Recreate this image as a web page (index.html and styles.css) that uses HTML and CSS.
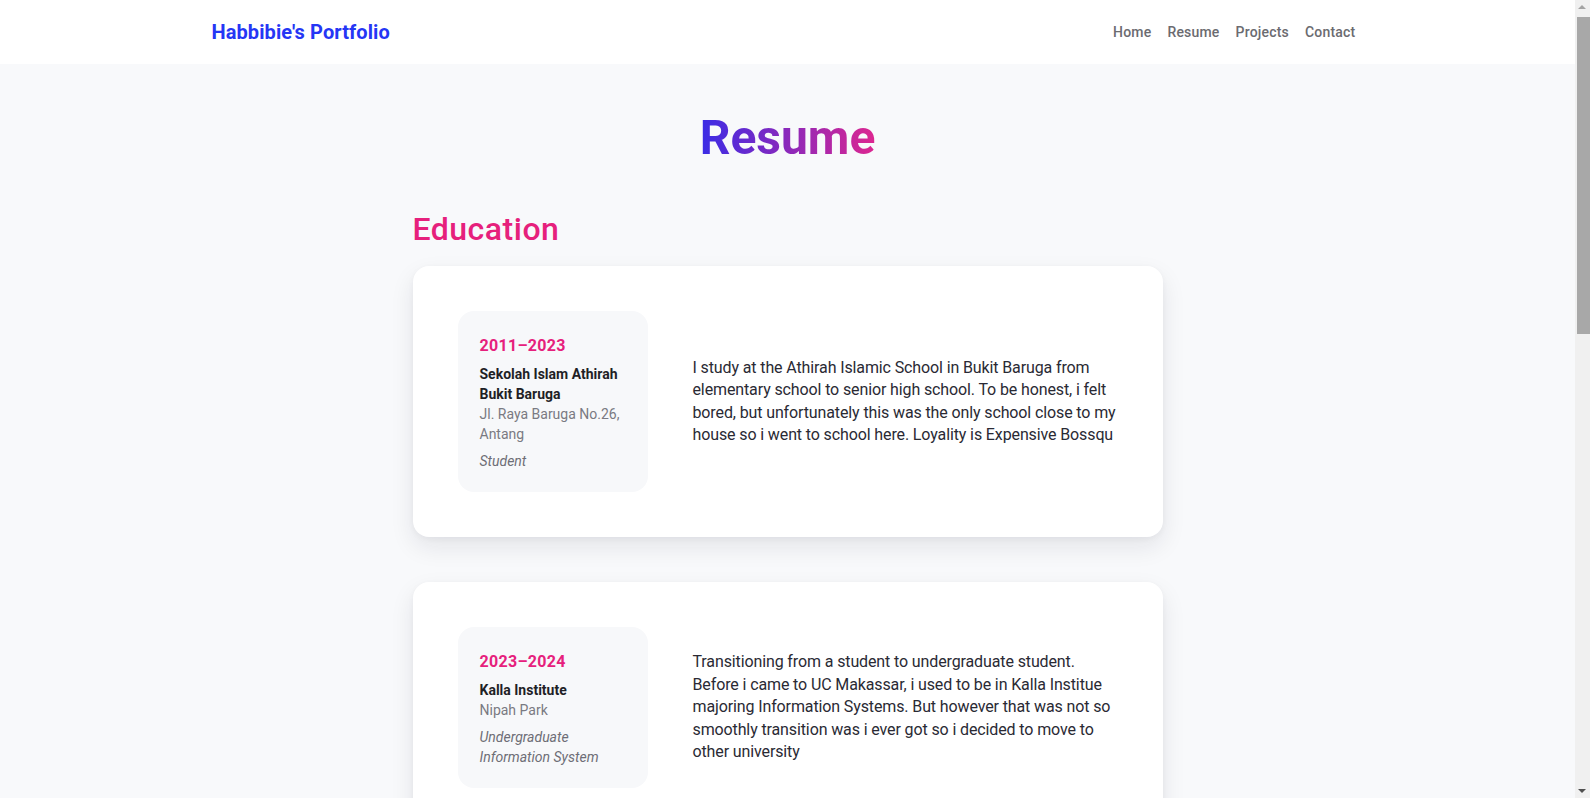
FILE: index.html
```html
<!DOCTYPE html>
<html lang="en">
<head>
<meta charset="utf-8">
<title>Resume - Habbibie's Portfolio</title>
<link rel="stylesheet" href="styles.css">
</head>
<body>
<header class="site-header">
  <div class="header-inner">
    <a class="logo" href="#">Habbibie's Portfolio</a>
    <nav class="nav">
      <a href="#">Home</a>
      <a href="#">Resume</a>
      <a href="#">Projects</a>
      <a href="#">Contact</a>
    </nav>
  </div>
</header>
<main class="page">
  <h1 class="page-title">Resume</h1>
  <section class="section">
    <h2 class="section-title">Education</h2>
    <article class="card">
      <div class="meta">
        <p class="meta-date">2011–2023</p>
        <p class="meta-name">Sekolah Islam Athirah Bukit Baruga</p>
        <p class="meta-place">Jl. Raya Baruga No.26, Antang</p>
        <p class="meta-role">Student</p>
      </div>
      <p class="desc">I study at the Athirah Islamic School in Bukit Baruga from elementary school to senior high school. To be honest, i felt bored, but unfortunately this was the only school close to my house so i went to school here. Loyality is Expensive Bossqu</p>
    </article>
    <article class="card">
      <div class="meta">
        <p class="meta-date">2023–2024</p>
        <p class="meta-name">Kalla Institute</p>
        <p class="meta-place">Nipah Park</p>
        <p class="meta-role">Undergraduate Information System</p>
      </div>
      <p class="desc">Transitioning from a student to undergraduate student. Before i came to UC Makassar, i used to be in Kalla Institue majoring Information Systems. But however that was not so smoothly transition was i ever got so i decided to move to other university</p>
    </article>
  </section>
</main>
<div class="scrollbar" aria-hidden="true">
  <span class="sb-up"></span>
  <span class="sb-thumb"></span>
  <span class="sb-down"></span>
</div>
</body>
</html>
```

FILE: styles.css
```css
* { box-sizing: border-box; }
html, body { margin: 0; padding: 0; }

body {
  background: #f8f9fb;
  font-family: "Roboto", "Liberation Sans", sans-serif;
  color: #24242e;
  padding-right: 15px;
}
p { margin: 0; }
a { text-decoration: none; }

/* classic scrollbar look */
.scrollbar {
  position: fixed;
  top: 0;
  right: 0;
  width: 15px;
  height: 100vh;
  background: #f0f0f0;
  z-index: 10;
}
.sb-up {
  position: absolute;
  top: 5px;
  left: 3px;
  width: 0;
  height: 0;
  border-left: 4.5px solid transparent;
  border-right: 4.5px solid transparent;
  border-bottom: 4px solid #a3a3a3;
}
.sb-down {
  position: absolute;
  bottom: 5px;
  left: 3px;
  width: 0;
  height: 0;
  border-left: 4.5px solid transparent;
  border-right: 4.5px solid transparent;
  border-top: 4px solid #505050;
}
.sb-thumb {
  position: absolute;
  top: 17px;
  left: 2px;
  right: 0;
  height: 317px;
  background: #a8a8a8;
}

.site-header {
  background: #ffffff;
  height: 64px;
}
.header-inner {
  max-width: 1152px;
  height: 64px;
  margin: 0 auto;
  display: flex;
  align-items: center;
  justify-content: space-between;
}
.logo {
  font-size: 20px;
  font-weight: 700;
  color: #2536f5;
  letter-spacing: 0.1px;
}
.nav { display: flex; }
.nav a {
  font-size: 14px;
  font-weight: 500;
  color: #6b6b70;
  padding: 0 8px;
  letter-spacing: 0.2px;
}

.page {
  min-height: 1870px;
  padding-top: 46px;
}
.page-title {
  text-align: center;
  font-size: 48px;
  line-height: 56px;
  font-weight: 700;
  background: linear-gradient(90deg, #3a2ce6 0%, #dc2690 100%);
  -webkit-background-clip: text;
  background-clip: text;
  color: transparent;
  width: fit-content;
  margin: 0 auto;
}
.section {
  width: 750px;
  margin: 0 auto;
  padding-top: 43px;
}
.section-title {
  margin: 0 0 17px;
  font-size: 32px;
  line-height: 40px;
  font-weight: 500;
  color: #e6207c;
  letter-spacing: 0.5px;
}
.card {
  background: #ffffff;
  border-radius: 16px;
  box-shadow: 0 10px 24px rgba(20, 24, 40, 0.09), 0 2px 6px rgba(20, 24, 40, 0.04);
  padding: 45px;
  display: flex;
  align-items: center;
  gap: 45px;
  margin-bottom: 45px;
}
.meta {
  flex: 0 0 190px;
  background: #f7f8fa;
  border-radius: 16px;
  padding: 23px 20px 21px 22px;
}
.meta-date {
  font-size: 16px;
  line-height: 24px;
  font-weight: 700;
  color: #e6207c;
  margin-bottom: 6px;
  letter-spacing: 0.3px;
}
.meta-name {
  font-size: 14px;
  line-height: 20px;
  font-weight: 700;
  color: #1f1f26;
}
.meta-place {
  font-size: 14px;
  line-height: 20px;
  color: #7a7a82;
}
.meta-role {
  margin-top: 7px;
  font-size: 14px;
  line-height: 20px;
  font-style: italic;
  color: #6e6e76;
}
.desc {
  flex: 1;
  font-size: 16px;
  line-height: 22.4px;
  color: #2a2a34;
  letter-spacing: -0.12px;
}
```
